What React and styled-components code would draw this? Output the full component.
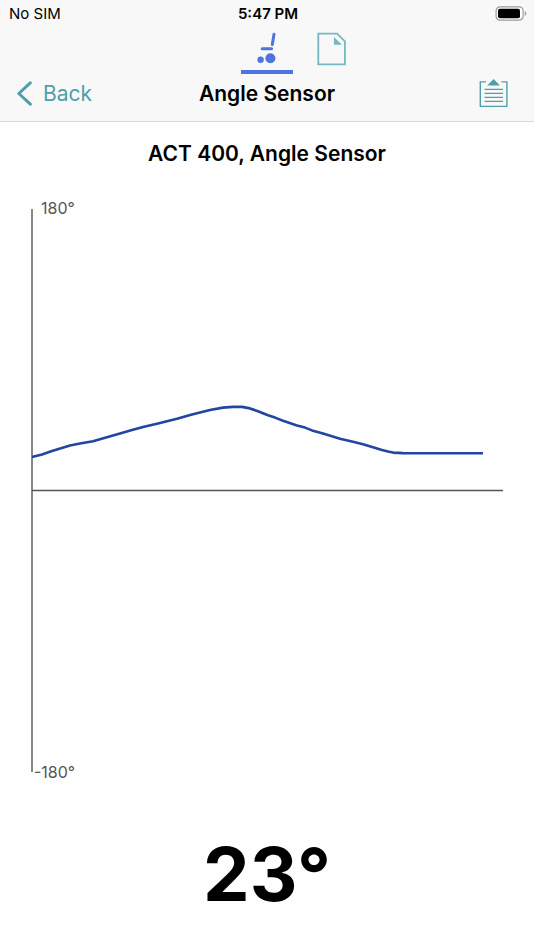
import React from 'react';
import styled, { createGlobalStyle } from 'styled-components';

const GlobalStyle = createGlobalStyle`
    * {
        box-sizing: border-box;
    }

    body {
        margin: 0;
        background-color: #fefefe;
        color: #000;
        font-family: Inter, 'Liberation Sans', sans-serif;
    }
`;

// Styled Components
const Page = styled.div`
    display: flex;
    flex-direction: column;
    min-height: 100vh;
`;

const Header = styled.header`
    background-color: #f8f8f8;
    border-bottom: 1px solid #d8d8d8;
`;

const StatusBar = styled.div`
    display: grid;
    grid-template-columns: 1fr auto 1fr;
    align-items: center;
    height: 28px;
    padding: 0 7px 0 9px;
    font-size: 15px;
    line-height: 28px;
`;

const Clock = styled.time`
    font-weight: 600;
`;

const Battery = styled.svg`
    justify-self: end;
    display: block;
`;

const Tabs = styled.nav`
    display: flex;
    justify-content: center;
    gap: 12px;
    padding-left: 64px;
`;

const Tab = styled.button`
    display: flex;
    justify-content: center;
    align-items: center;
    width: 52px;
    height: 46px;
    padding: 0;
    border: none;
    border-bottom: 4px solid ${({ $active }) => ($active ? '#4f73df' : 'transparent')};
    background: none;
    color: ${({ $active }) => ($active ? '#4f73df' : '#76b7c1')};
    cursor: pointer;
`;

const NavBar = styled.div`
    display: grid;
    grid-template-columns: 1fr auto 1fr;
    align-items: center;
    height: 47px;
    padding: 0 26px 8px 16px;
`;

const NavButton = styled.button`
    display: flex;
    align-items: center;
    gap: 10px;
    justify-self: ${({ $end }) => ($end ? 'end' : 'start')};
    padding: 0;
    border: none;
    background: none;
    color: #519eab;
    font-family: inherit;
    font-size: 21px;
    line-height: 28px;
    cursor: pointer;
`;

const Title = styled.h1`
    margin: 0 0 0 10px;
    font-size: 21px;
    line-height: 28px;
    font-weight: 600;
`;

const Main = styled.main`
    display: flex;
    flex-direction: column;
    flex: 1;
    padding-top: 18px;
`;

const SensorName = styled.h2`
    margin: 0;
    text-align: center;
    font-size: 21px;
    line-height: 28px;
    font-weight: 600;
`;

const Chart = styled.svg`
    display: block;
    width: 100%;
    height: auto;
    margin-top: 24px;
`;

const AxisLabel = styled.text`
    fill: #555;
    font-size: 16px;
`;

const Reading = styled.output`
    display: block;
    margin-top: 40px;
    text-align: center;
    font-size: 74px;
    line-height: 92px;
    font-weight: 700;
`;

// Recorded samples, in chart units
const samples = [
    [32, 265], [42, 262.5], [52, 259], [70, 253.6], [80, 251.6], [93, 249.2],
    [106, 245.6], [120, 241.5], [132, 238], [143, 235], [157, 231.8], [177, 226.8],
    [192, 222.6], [210, 218], [223, 215.6], [233, 214.9], [242, 214.9], [250, 216.4],
    [258, 219.2], [268, 223.2], [275, 225.6], [283, 228.8], [297, 233.4], [305, 235.6],
    [312, 238.4], [323, 241.6], [340, 246.8], [353, 249.8], [363, 252.2], [373, 255.2],
    [382, 258], [388, 259.6], [393, 260.6], [403, 261.1], [483, 261.2],
];

const WheelchairIcon = () => (
    <svg width="20" height="34" viewBox="0 0 20 34" fill="none" stroke="currentColor" strokeWidth="3" strokeLinecap="round" aria-hidden="true">
        <path d="M17 2.2L15.3 12.4M5.2 16.7H14.6" />
        <circle cx="3.6" cy="27.8" r="3.2" fill="currentColor" stroke="none" />
        <circle cx="13.4" cy="26.3" r="5" fill="currentColor" stroke="none" />
    </svg>
);

const FileIcon = () => (
    <svg width="30" height="34" viewBox="0 0 30 34" aria-hidden="true">
        <path d="M2.3 1.7H21.1L28.9 9.4V32.4H2.3Z" fill="none" stroke="currentColor" strokeWidth="1.8" />
        <path d="M17.9 5L26 12.8H17.9Z" fill="currentColor" />
    </svg>
);

const BackIcon = () => (
    <svg width="17" height="26" viewBox="0 0 17 26" fill="none" stroke="currentColor" strokeWidth="3" strokeLinecap="round" strokeLinejoin="round" aria-hidden="true">
        <path d="M14.3 1.8L2.8 12.5L14.3 23.2" />
    </svg>
);

const ReportIcon = () => (
    <svg width="29" height="30" viewBox="0 0 29 30" fill="none" stroke="currentColor" strokeWidth="1.4" aria-hidden="true">
        <path d="M7 2.9H1.3V27.4H27.9V2.9H22.4" />
        <path d="M5.6 10.4H24M5.6 14.4H24M5.6 18.4H24M5.6 22.4H24" />
        <path d="M8.2 6.6L14.6 0L21 6.6Z" fill="currentColor" stroke="none" />
    </svg>
);

const App = () => {
    const points = samples.map((sample) => sample.join(',')).join(' ');

    return (
        <Page>
            <GlobalStyle />
            <Header>
                <StatusBar>
                    <span>No SIM</span>
                    <Clock>5:47 PM</Clock>
                    <Battery width="32" height="16" viewBox="0 0 32 16" role="img" aria-label="Battery full">
                        <rect x="1.1" y="0.8" width="27" height="13.4" rx="4" fill="#fff" stroke="#999" strokeWidth="1.2" />
                        <rect x="3" y="2.7" width="22" height="9.6" rx="2" fill="#000" />
                        <path d="M29.8 5C31.8 5.8 31.8 9.2 29.8 10Z" fill="#999" />
                    </Battery>
                </StatusBar>

                <Tabs>
                    <Tab type="button" $active aria-label="Wheelchair" aria-current="page">
                        <WheelchairIcon />
                    </Tab>
                    <Tab type="button" aria-label="Documents">
                        <FileIcon />
                    </Tab>
                </Tabs>

                <NavBar>
                    <NavButton type="button">
                        <BackIcon />
                        Back
                    </NavButton>
                    <Title>Angle Sensor</Title>
                    <NavButton type="button" $end aria-label="Report">
                        <ReportIcon />
                    </NavButton>
                </NavBar>
            </Header>

            <Main>
                <SensorName>ACT 400, Angle Sensor</SensorName>

                <Chart viewBox="0 0 534 596" role="img" aria-label="Angle over time">
                    <path d="M32 17V580M32 298.5H503" fill="none" stroke="#555" strokeWidth="1.4" />
                    <polyline points={points} fill="none" stroke="#2145a0" strokeWidth="2.6" strokeLinejoin="round" />
                    <AxisLabel x="41" y="22">180°</AxisLabel>
                    <AxisLabel x="34" y="586">-180°</AxisLabel>
                </Chart>

                <Reading>23°</Reading>
            </Main>
        </Page>
    );
};

export default App;
